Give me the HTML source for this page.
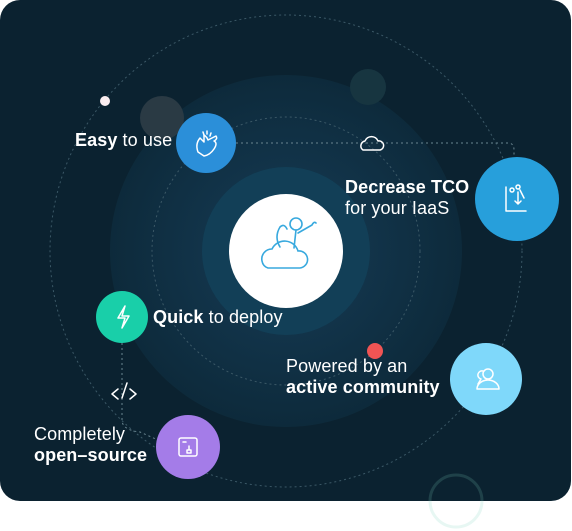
<!DOCTYPE html>
<html><head><style>
html,body{margin:0;padding:0;background:#fff;width:572px;height:531px;overflow:hidden;font-family:"Liberation Sans",sans-serif}
.t{position:absolute;color:#fff;font-size:18px;line-height:21px;white-space:nowrap;letter-spacing:0.1px}
b{font-weight:bold}
</style></head><body>
<svg width="572" height="531" style="position:absolute;left:0;top:0">
<defs>
<radialGradient id="g" cx="0.5" cy="0.5" r="0.5">
<stop offset="0.45" stop-color="#12344a"/><stop offset="1" stop-color="#0d2a3b"/>
</radialGradient>
<clipPath id="c"><rect x="0" y="0" width="571" height="501" rx="20"/></clipPath>
</defs>
<rect x="0" y="0" width="571" height="501" rx="20" fill="#0b2230"/>
<g clip-path="url(#c)">
<circle cx="286" cy="251" r="176" fill="url(#g)"/>
<circle cx="286" cy="251" r="84" fill="#123f57"/>
<circle cx="286" cy="251" r="134" fill="none" stroke="#3b5866" stroke-width="1" stroke-dasharray="2 3"/>
<circle cx="286" cy="251" r="236" fill="none" stroke="#3b5866" stroke-width="1" stroke-dasharray="2 3"/>
<path d="M236 143 H508 Q514 143 514 150 V158" fill="none" stroke="#6a8590" stroke-dasharray="2 3"/>
<path d="M122 343 V420 Q122 430 140 432 L158 440" fill="none" stroke="#6a8590" stroke-dasharray="2 3"/>
<circle cx="162" cy="118" r="22" fill="#2a3a44"/>
<circle cx="368" cy="87" r="18" fill="#173540"/>
<circle cx="105" cy="101" r="5" fill="#fbeef0"/>
<circle cx="375" cy="351" r="8" fill="#f05454"/>
</g>
<circle cx="456" cy="501" r="26" fill="none" stroke="rgba(120,210,190,0.18)" stroke-width="3"/>
<circle cx="286" cy="251" r="57" fill="#fff"/>
<g fill="none" stroke="#38a9de" stroke-width="1.6" stroke-linecap="round" transform="translate(0,-19)">
<path d="M262 280 a10 10 0 0 1 10-12 a14 14 0 0 1 26 2 a8 8 0 0 1 2 17 h-32 a9 9 0 0 1 -6-7z"/>
<path d="M280 266 q-6-10 0-20 q4-4 7 2"/>
<circle cx="296" cy="243" r="6"/>
<path d="M296 249 l-2 18 M298 252 l14-8 q2-4 4-2"/>
</g>
<circle cx="206" cy="143" r="30" fill="#2b8fd9"/>
<circle cx="517" cy="199" r="42" fill="#279fdb"/>
<circle cx="122" cy="317" r="26" fill="#19cfa9"/>
<circle cx="486" cy="379" r="36" fill="#7fd8fa"/>
<circle cx="188" cy="447" r="32" fill="#a47ce8"/>
<g fill="none" stroke="#fff" stroke-width="1.5" stroke-linecap="round" stroke-linejoin="round">
<path d="M198 152 q-3-8 2-14 l4 4 v-7 q3 2 4 5 l8-4 q2 3-2 5 q4 2 0 8 q-4 6-10 7z"/>
<path d="M203 132 l1 3 M207 131 v3 M211 133 l-1 3"/>
<path d="M506 187 v24 h20 M510 190 a2 2 0 1 0 4 0 a2 2 0 1 0 -4 0 M516 187 a2 2 0 1 0 4 0 a2 2 0 1 0-4 0 M520 190 l4 8 M518 192 v12 l-3-3 M518 204 l3-3"/>
<circle cx="488" cy="374" r="5"/>
<path d="M477 389 a11 9 0 0 1 22 0 z M483 371 a4 4 0 0 0 -2 8 l-3 5"/>
<path d="M125 306 l-7 12 h7 l-3 10 l7-12 h-7z"/>
<rect x="179" y="438" width="18" height="18" rx="2"/>
<path d="M183 442 h3 M187 450 h4 v3 h-4z M189 446 v4"/>
<path d="M363 150 a5 5 0 0 1 2-9 a7 7 0 0 1 13 0 a4 4 0 0 1 2 9 z"/>
<path d="M118 389 l-6 5 l6 5 M130 389 l6 5 l-6 5 M127 383 l-5 15"/>
</g>
</svg>
<div class="t" style="left:75px;top:130px"><b>Easy</b> to use</div>
<div class="t" style="left:345px;top:177px"><b>Decrease TCO</b><br>for your IaaS</div>
<div class="t" style="left:153px;top:307px"><b>Quick</b> to deploy</div>
<div class="t" style="left:286px;top:356px">Powered by an<br><b>active community</b></div>
<div class="t" style="left:34px;top:424px">Completely<br><b>open–source</b></div>
</body></html>
